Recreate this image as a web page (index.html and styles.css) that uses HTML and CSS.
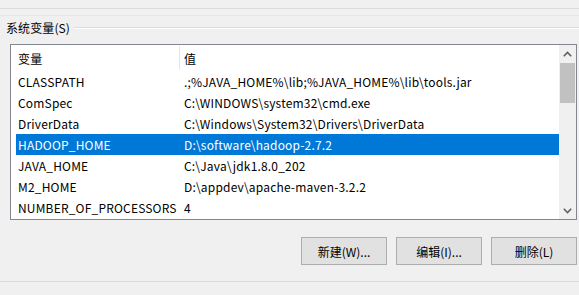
FILE: index.html
```html
<!DOCTYPE html>
<html lang="zh-CN">
<head>
<meta charset="utf-8">
<link rel="stylesheet" href="styles.css">
</head>
<body>
<div class="page">
  <div class="rule rule-top"></div>
  <div class="rule rule-faint"></div>
  <div class="group-head">
    <span class="group-label">系统变量(S)</span>
    <span class="group-line"></span>
  </div>
  <div class="listview">
    <div class="lv-body">
      <div class="lv-header">
        <div class="col col-name">变量</div>
        <div class="col-sep"></div>
        <div class="col col-val">值</div>
      </div>
      <div class="lv-rows">
        <div class="row"><div class="col col-name">CLASSPATH</div><div class="col col-val">.;%JAVA_HOME%\lib;%JAVA_HOME%\lib\tools.jar</div></div>
        <div class="row"><div class="col col-name">ComSpec</div><div class="col col-val">C:\WINDOWS\system32\cmd.exe</div></div>
        <div class="row"><div class="col col-name">DriverData</div><div class="col col-val">C:\Windows\System32\Drivers\DriverData</div></div>
        <div class="row selected"><div class="col col-name">HADOOP_HOME</div><div class="col col-val">D:\software\hadoop-2.7.2</div></div>
        <div class="row"><div class="col col-name">JAVA_HOME</div><div class="col col-val">C:\Java\jdk1.8.0_202</div></div>
        <div class="row"><div class="col col-name">M2_HOME</div><div class="col col-val">D:\appdev\apache-maven-3.2.2</div></div>
        <div class="row"><div class="col col-name">NUMBER_OF_PROCESSORS</div><div class="col col-val">4</div></div>
      </div>
    </div>
    <div class="scrollbar">
      <div class="sb-btn">
        <svg width="9" height="6" viewBox="0 0 9 6"><path d="M0.8 5.2 L4.5 1.5 L8.2 5.2" fill="none" stroke="#606060" stroke-width="1.6"/></svg>
      </div>
      <div class="sb-track">
        <div class="sb-thumb"></div>
      </div>
      <div class="sb-btn">
        <svg width="9" height="6" viewBox="0 0 9 6"><path d="M0.8 0.8 L4.5 4.5 L8.2 0.8" fill="none" stroke="#606060" stroke-width="1.6"/></svg>
      </div>
    </div>
  </div>
  <div class="buttons">
    <button class="btn">新建(W)...</button>
    <button class="btn">编辑(I)...</button>
    <button class="btn">删除(L)</button>
  </div>
  <div class="rule rule-bottom"></div>
</div>
</body>
</html>
```

FILE: styles.css
```css
html, body {
  margin: 0;
  padding: 0;
  background: #f0f0f0;
}
.page {
  width: 579px;
  height: 295px;
  overflow: hidden;
  font-family: "Noto Sans CJK SC", "Noto Sans", sans-serif;
  font-size: 12px;
  color: #000;
}
.rule {
  height: 1px;
  background: #dcdcdc;
}
.rule-top {
  margin-top: 8px;
}
.rule-faint {
  margin-top: 6px;
  background: #e6e6e6;
}
.group-head {
  display: flex;
  align-items: center;
  height: 22px;
  margin-top: 1px;
}
.group-label {
  padding-left: 6px;
  padding-right: 4px;
  line-height: 22px;
  white-space: nowrap;
  letter-spacing: 0.1px;
}
.group-line {
  flex: 1;
  height: 1px;
  background: #dcdcdc;
  border-bottom: 1px solid #ffffff;
}
.listview {
  margin: 5px 2px 0 10px;
  height: 174px;
  border: 1px solid #828790;
  background: #fff;
  display: flex;
}
.lv-body {
  flex: 1;
  padding-left: 5px;
  letter-spacing: 0.18px;
}
.lv-header {
  display: flex;
  align-items: center;
  height: 26px;
}
.col {
  white-space: nowrap;
  overflow: hidden;
}
.col-name {
  width: 168px;
  padding-left: 2px;
  box-sizing: border-box;
}
.lv-header .col-name {
  width: 163px;
}
.col-sep {
  width: 1px;
  height: 24px;
  background: #e5e5e5;
  margin-right: 4px;
}
.col-val {
  flex: 1;
}
.row {
  display: flex;
  align-items: center;
  height: 21px;
}
.row.selected {
  background: #0078d7;
  color: #fff;
}
.scrollbar {
  width: 17px;
  background: #f0f0f0;
  display: flex;
  flex-direction: column;
}
.sb-btn {
  height: 17px;
  display: flex;
  align-items: center;
  justify-content: center;
}
.sb-track {
  flex: 1;
  padding: 1px 1px 0 1px;
}
.sb-thumb {
  height: 40px;
  background: #c1c1c1;
}
.buttons {
  display: flex;
  justify-content: flex-end;
  gap: 9px;
  margin-top: 17px;
  padding-right: 2px;
}
.btn {
  width: 86px;
  height: 28px;
  background: #e1e1e1;
  border: 1px solid #adadad;
  font-family: "Noto Sans CJK SC", "Noto Sans", sans-serif;
  font-size: 12px;
  color: #000;
  padding: 0;
}
.rule-bottom {
  margin-top: 16px;
  background: #dcdcdc;
}
```
